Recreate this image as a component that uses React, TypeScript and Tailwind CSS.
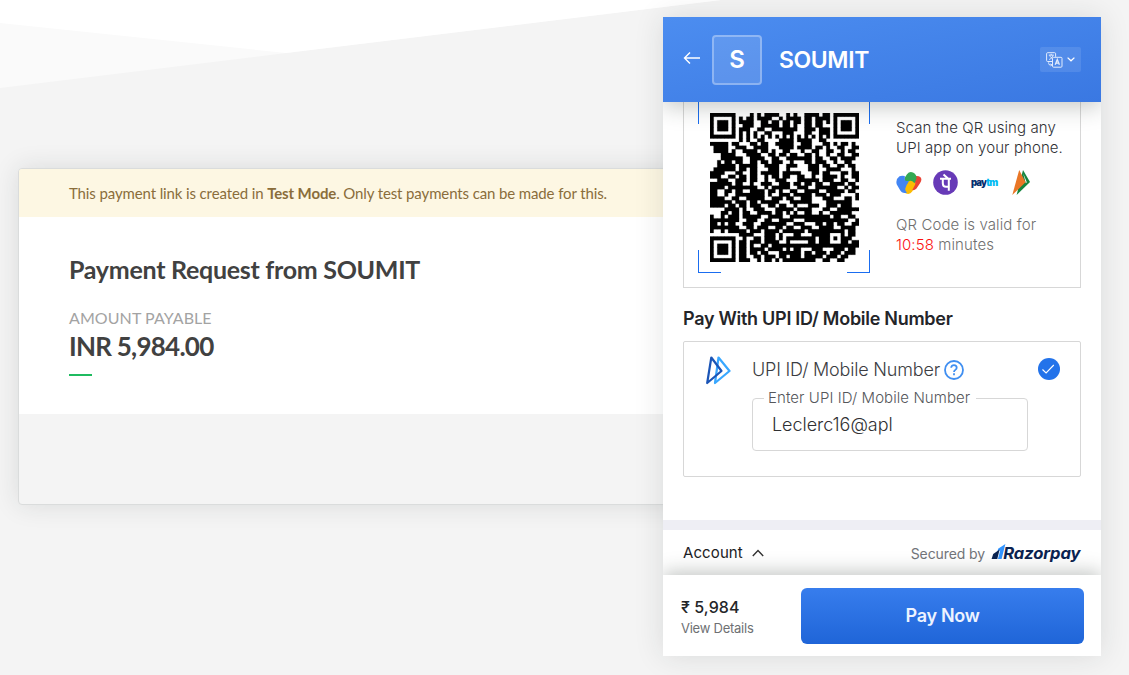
import React from "react";

const QR_ROWS = [
  "11111110000101011110010100111101101111111",
  "10000010101101111001011110110111101000001",
  "10111010111100110110110110110110101011101",
  "10111010011100111110110100110110001011101",
  "10111010111001100111111100111011101011101",
  "10000010101010011000111000110011101000001",
  "11111110101010101010101010101010101111111",
  "00000000101001100001111011110011000000000",
  "11111011000110110011111001110001101011010",
  "01111001110011110001111011110110100110011",
  "01111010011110110100110001001100110010110",
  "00011110001111001101101100110100100110011",
  "00011111100111100110011111110110011011110",
  "00101101100110110111001000110111001001100",
  "00111110111110011110011100011101100110110",
  "01111110110110001110010000011100111100010",
  "11110001100110111110111110001101100011011",
  "11100110110110010110110011001001111010011",
  "00111001110110010011100011111101110011001",
  "11111101100100111001110110110110011110110",
  "11110111111110010111110011100111111001011",
  "11001101100111101101001100111100111110110",
  "11001001111111101001110111110111011100001",
  "11110011001111100111011001110001110001101",
  "11111101110110111110001111110000111111100",
  "11110110110111001101100100011100111011100",
  "00001111010011100011111011110001100111111",
  "00011011011001111011010100110010011111100",
  "10010111011111001111001111111111101100110",
  "11111111001110011001111000111111111111001",
  "11010110011100111111100111000110110110011",
  "11111111001101110011011001110011110011110",
  "10010111110111011110111111011111111110110",
  "00000000111100011101000110001111100010110",
  "11111110010011011101011111111011101011100",
  "10000010110111011110010000011011100011011",
  "10111010110100110111111111111111111111111",
  "10111010110111101111010110001110001110110",
  "10111010110110110001111110110111011101110",
  "10000010110011011101101110111110111011000",
  "11111110111001011010111111111001100110000",
];

const QR_PATH = QR_ROWS.map((row, y) =>
  [...row].map((cell, x) => (cell === "1" ? `M${x} ${y}h1v1h-1z` : "")).join("")
).join("");

function QrCode() {
  return (
    <div className="relative h-[178px] w-[172px] shrink-0">
      <div className="absolute left-0 top-0 h-[29px] w-[23px] border-l border-[#1a6df0]" />
      <div className="absolute right-0 top-0 h-[29px] w-[23px] border-r border-[#1a6df0]" />
      <div className="absolute bottom-0 left-0 h-[23px] w-[23px] border-b border-l border-[#1a6df0]" />
      <div className="absolute bottom-0 right-0 h-[23px] w-[23px] border-b border-r border-[#1a6df0]" />
      <svg className="absolute left-[11.5px] top-[17.5px] size-[149px]" viewBox="0 0 41 41" shapeRendering="geometricPrecision">
        <path d={QR_PATH} fill="#000" stroke="#000" strokeWidth=".06" />
      </svg>
    </div>
  );
}

function GooglePay() {
  return (
    <svg className="size-[26px]" viewBox="0 0 26 26" fill="none">
      <path d="M9 15 15 9l5.5 5-4.3 7.6Q14 25 10 23.6 6 21.5 7 19z" fill="#fbbc04" />
      <path d="M19.5 6q5.7-.6 5.9 3.5 0 1.5-1.4 3.7l-3.5 5.4q-2 2-4.2 1.5l2.8-5.3Q20 12 17 10z" fill="#ea4335" />
      <path d="M8.5 8 11 4.2q2.5-3.2 6-1.7 4.5 2.5 3.3 6.5-.8 2.5-1.8 4.2Q15 9.5 12.5 11.5L11 14 8.5 11z" fill="#34a853" />
      <path d="M3.5 6.3Q5 5.5 8.8 6v3.5q.2 1.7 4 1.6Q10.5 15 9.3 18.5 8.9 21 11 22.7 6 24 4 20L.8 14.5Q-.8 9.5 3.5 6.3z" fill="#4285f4" />
    </svg>
  );
}

function PhonePe() {
  return (
    <svg className="size-[25px]" viewBox="0 0 25 25" fill="none">
      <circle cx="12.5" cy="12.5" r="12.3" fill="#673ab7" />
      <path d="M7 8.7h11M9.8 8.7v4.5q0 3.5 3.2 3.5h2.8M15.8 8.7v12M10.5 4.4l4.8 4.3" stroke="#fff" strokeWidth="2" />
    </svg>
  );
}

function Bhim() {
  return (
    <svg className="h-[25px] w-[18px]" viewBox="0 0 18 25">
      <path d="m11 0 7 12.1L4.6 25z" fill="#14853f" />
      <path d="m11.2 3.4 3.6 8.9-1 1z" fill="#fff" />
      <path d="M7.2 0 13.6 12.3.3 25z" fill="#e97626" />
    </svg>
  );
}

function TranslateIcon() {
  return (
    <svg className="h-[16px] w-[17px]" viewBox="0 0 17 16" fill="none" stroke="#e2ecfd" strokeWidth="1">
      <path d="M6.2 9.5H1.6a1 1 0 0 1-1-1V1.7a1 1 0 0 1 1-1h7a1 1 0 0 1 1 1v3.1" />
      <rect x="6.5" y="5.3" width="9.5" height="9.9" rx="1" />
      <path d="M2.8 3.1h5M5.2 1.8v1.3M3.7 3.3c.7 2 1.8 2.9 3 3.5M7 3.3C6.3 5.5 4.8 6.8 3.2 7.5M2.7 10.3v1.2q0 1.4 1.3 1.4h1.7M4.7 11.8l1.2 1.1-1.2 1.1" />
      <path d="m9.2 12.7 2.1-5.2 2.1 5.2M9.9 11.1h2.8" strokeWidth="1.3" />
    </svg>
  );
}

function RazorpayLogo() {
  return (
    <svg className="h-[20px] w-[90px] overflow-visible" viewBox="0 0 90 20">
      <path d="M7.1 4.7 14.4 0l-3.8 15H7L9.2 6.2 6.5 7.6z" fill="#3395ff" />
      <path d="m2.2 10 6.4-4.6L6.3 15H.6z" fill="#0b2350" />
      <text x="12.3" y="15" fontFamily="Inter, sans-serif" fontSize="15.8" fontStyle="italic" fontWeight="700" fill="#0b2350" textLength="77" lengthAdjust="spacingAndGlyphs">Razorpay</text>
    </svg>
  );
}

function PaymentLinkCard() {
  return (
    <main className="ml-[18px] h-[337px] w-[1000px] overflow-hidden rounded-[4px] border border-[#dadcdc] bg-[#f4f4f4] font-['Lato',sans-serif] shadow-[0_0_26px_rgba(35,45,40,0.12)]">
      <div className="flex h-[48px] items-center bg-[#fdf7e3] pl-[50px] text-[15px] leading-5 tracking-[-0.12px] text-[#8a6d3b]">
        <p className="whitespace-nowrap">This payment link is created in <b>Test Mode</b>. Only test payments can be made for this.</p>
      </div>
      <div className="h-[197px] bg-white pl-[50px] pt-[35px] text-[#414141]">
        <h1 className="text-[25px] font-bold leading-[34px] tracking-[-0.28px]">Payment Request from SOUMIT</h1>
        <p className="mt-[22px] text-[16px] leading-[20px] tracking-[0.08px] text-[#a3a3a3]">AMOUNT PAYABLE</p>
        <p className="mt-[2px] text-[26px] font-bold leading-[32px] tracking-[-0.75px]">INR 5,984.00</p>
        <div className="mt-[12px] h-[2px] w-[23px] bg-[#1fbb60]" />
      </div>
    </main>
  );
}

function CheckoutHeader() {
  return (
    <header className="relative z-10 flex h-[85px] shrink-0 items-center bg-linear-to-br from-[#4c8df0] to-[#3a78e2] pl-[20px] pr-[20px] text-white shadow-[0_4px_22px_rgba(35,45,40,0.28)]">
      <svg className="mb-[3px] h-[14px] w-[17px]" viewBox="0 0 17 14" fill="none" stroke="#fff" strokeWidth="1.4"><path d="M17 7H1.5M7 1.5 1.5 7 7 12.5" /></svg>
      <div className="ml-[12px] flex size-[50px] items-center justify-center rounded-[4px] border-2 border-white/30 bg-white/13 pt-[1px] text-[24px] font-semibold">S</div>
      <h2 className="ml-[17px] pt-[2px] text-[23px] font-semibold tracking-[-0.4px]">SOUMIT</h2>
      <button className="ml-auto flex h-[25px] w-[41px] items-center gap-[4px] rounded-[2px] bg-white/10 pl-[6px]">
        <TranslateIcon />
        <svg className="h-[5px] w-[8px]" viewBox="0 0 8 5" fill="none" stroke="#fff" strokeWidth="1.3"><path d="m.6.6 3.4 3.2L7.4.6" /></svg>
      </button>
    </header>
  );
}

function ScanPanel() {
  return (
    <section className="-mt-[5px] flex h-[191px] shrink-0 border-x border-b border-[#d7d7d7] pl-[14px]">
      <div className="-mt-[2px]"><QrCode /></div>
      <div className="ml-[26px] pt-[21px] text-[15px] leading-5">
        <p className="whitespace-nowrap font-light tracking-[0.09px] text-[#303136]">Scan the QR using any<br />UPI app on your phone.</p>
        <div className="mt-[11px] flex h-[27px] items-center">
          <GooglePay />
          <div className="ml-[11px] flex"><PhonePe /></div>
          <div className="ml-[13px] w-[27px] whitespace-nowrap pt-px text-[9.5px] font-black leading-3 tracking-[-0.9px] text-[#062e6f]">pay<span className="text-[#00baf2]">tm</span></div>
          <div className="ml-[14px] flex"><Bhim /></div>
        </div>
        <p className="mt-[19px] whitespace-nowrap font-light tracking-[0.1px] text-[#6f6f6f]">QR Code is valid for<br /><span className="text-[#fc1010]">10:58</span> minutes</p>
      </div>
    </section>
  );
}

function UpiPanel() {
  return (
    <section className="mt-[10px] h-[136px] shrink-0 rounded-[2px] border border-[#d7d7d7]">
      <div className="flex h-[55px] items-center pl-[22px] pr-[20px]">
        <svg className="mt-[2px] h-[29px] w-[25px]" viewBox="0 0 25 29" fill="none" strokeWidth="2.2" strokeLinejoin="round">
          <path d="M12.5 1.5 23.5 15 9 27z" stroke="#38a7ff" />
          <path d="M5.3 1.5 15.5 15 1.2 27z" stroke="#1b55b6" />
        </svg>
        <p className="ml-[21px] w-[188px] whitespace-nowrap text-[18px] font-light tracking-[-0.19px] text-[#3c3d42]">UPI ID/ Mobile Number</p>
        <svg className="ml-[4px] size-[20px]" viewBox="0 0 20 20" fill="none" stroke="#408ff1" strokeWidth="1.8">
          <circle cx="10" cy="10" r="9" /><path d="M7.2 7.7c0-3.5 5.5-3.4 5.5 0 0 2.2-2.7 2.1-2.7 4.2M10 13.2v2" />
        </svg>
        <svg className="mb-px ml-auto size-[22px]" viewBox="0 0 22 22" fill="none">
          <circle cx="11" cy="11" r="11" fill="#2373ea" /><path d="m4.5 11.5 3.6 3.5 7.7-8" stroke="#fff" strokeWidth="1.1" />
        </svg>
      </div>
      <fieldset className="-mt-[8px] ml-[68px] h-[62px] w-[276px] rounded-[4px] border border-[#d7d7d7]">
        <legend className="ml-[11px] h-[18px] w-[212px] whitespace-nowrap px-[4px] text-[15px] font-light leading-[18px] tracking-[0.07px] text-[#55575b]">Enter UPI ID/ Mobile Number</legend>
        <p className="ml-[19px] mt-[6px] text-[18px] font-light leading-[24px] tracking-[-0.05px] text-[#303032]">Leclerc16@apl</p>
      </fieldset>
    </section>
  );
}

function CheckoutFooter() {
  return (
    <footer className="relative flex h-[81px] shrink-0 items-center bg-white pl-[18px] pr-[17px] shadow-[0_-3px_18px_rgba(35,45,40,0.28)]">
      <div className="w-[120px] pt-[4px]">
        <p className="text-[16px] font-medium leading-5 tracking-[0.1px] text-[#242528]">₹ 5,984</p>
        <p className="mt-[1px] text-[13px] leading-5 tracking-[-0.25px] text-[#6e7073]">View Details</p>
      </div>
      <button className="h-[56px] flex-1 rounded-[6px] bg-linear-to-b from-[#377ded] to-[#1f65d8] text-[18px] font-semibold tracking-[-0.3px] text-[#edf3ff]">Pay Now</button>
    </footer>
  );
}

export default function App() {
  return (
    <div className="relative h-[675px] w-[1129px] overflow-hidden bg-[#f4f4f4] pt-[168px] font-['Inter',sans-serif]">
      <svg className="absolute left-0 top-0 h-[90px] w-[740px]" viewBox="0 0 740 90">
        <path d="M0 0H721L286 53 0 88z" fill="#fafafa" />
        <path d="M0 0H721L286 53 0 23z" fill="#fff" />
      </svg>
      <div className="relative w-[1018px]"><PaymentLinkCard /></div>
      <div className="absolute left-[663px] top-[17px] h-[639px] w-[438px] shadow-[0_0_28px_rgba(35,45,40,0.12)]">
        <div className="flex h-full flex-col overflow-hidden bg-white">
          <CheckoutHeader />
          <div className="flex h-[418px] shrink-0 flex-col px-[20px]">
            <ScanPanel />
            <h3 className="mt-[19px] text-[18px] font-semibold leading-[24px] tracking-[-0.28px] text-[#242529]">Pay With UPI ID/ Mobile Number</h3>
            <UpiPanel />
          </div>
          <div className="h-[10px] shrink-0 bg-[#eeeef4]" />
          <div className="flex h-[45px] shrink-0 items-center justify-between px-[20px] pt-[2px]">
            <div className="flex items-center gap-[9px] text-[15px] tracking-[0.1px] text-[#202124]">
              Account
              <svg className="mb-px h-[8px] w-[12px]" viewBox="0 0 12 8" fill="none" stroke="#333" strokeWidth="1.4"><path d="m.8 7 5.2-5.5L11.2 7" /></svg>
            </div>
            <div className="flex items-center gap-[6px] text-[14px] tracking-[-0.1px] text-[#72757a]">Secured by <RazorpayLogo /></div>
          </div>
          <CheckoutFooter />
        </div>
      </div>
    </div>
  );
}
